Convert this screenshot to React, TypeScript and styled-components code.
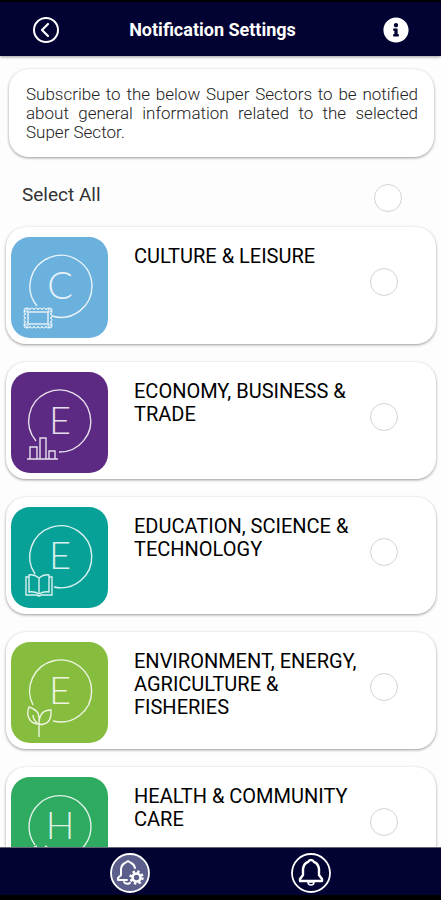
import React from "react";
import styled, { createGlobalStyle } from "styled-components";
import { FaInfoCircle } from "react-icons/fa";

const navy = "#020233";

const GlobalStyle = createGlobalStyle`
  * { box-sizing: border-box; }
  body { margin: 0; background: #fdfdfd; font-family: Roboto, sans-serif; }
`;

const Screen = styled.div`
  display: flex;
  flex-direction: column;
  height: 100vh;
  color: #000;
`;

const Header = styled.header`
  display: flex;
  align-items: center;
  justify-content: space-between;
  flex: none;
  height: 56px;
  padding: 2px 32px 0;
  border-top: 2px solid #000;
  background: ${navy};
  color: #fff;
  box-shadow: 0 1px 3px rgba(0, 0, 0, 0.4);
`;

const Heading = styled.h1`
  margin: 0 18px 0 0;
  font-size: 18px;
  line-height: 24px;
  font-weight: 700;
`;

const IconButton = styled.button`
  display: flex;
  padding: 0;
  border: 0;
  background: none;
  color: inherit;
  cursor: pointer;
`;

const Content = styled.main`
  flex: 1;
  min-height: 0;
  padding-top: 13px;
  overflow-y: auto;
  scrollbar-width: none;
`;

const Intro = styled.p`
  margin: 0 7px 0 9px;
  padding: 16px 16px 15px 17px;
  border-radius: 20px;
  background: #fff;
  box-shadow: 0 1px 3px rgba(0, 0, 0, 0.4);
  color: #222;
  font-size: 17px;
  line-height: 19px;
  font-weight: 300;
  text-align: justify;
`;

const SelectAll = styled.label`
  display: flex;
  justify-content: space-between;
  padding: 27px 39px 15px 22px;
  color: #333;
  font-size: 19px;
  line-height: 22px;
`;

const Check = styled.input`
  appearance: none;
  flex: none;
  width: 28px;
  height: 28px;
  margin: 0;
  border: 1px solid #d4d4d4;
  border-radius: 50%;
  background: #fff;
  cursor: pointer;

  &:checked { background: ${navy}; }
`;

const List = styled.ul`
  display: flex;
  flex-direction: column;
  gap: 18px;
  margin: 0;
  padding: 0 5px 18px 6px;
  list-style: none;
`;

const Card = styled.label`
  display: flex;
  align-items: center;
  padding: 10px 38px 6px 5px;
  border-radius: 20px;
  background: #fff;
  box-shadow: 0 1px 3px rgba(0, 0, 0, 0.4);
  cursor: pointer;

  ${Check} { margin-bottom: 12px; }
`;

const Tile = styled.svg<{ $color: string }>`
  flex: none;
  width: 97px;
  height: 101px;
  border-radius: 19px;
  background: ${(p) => p.$color};
  fill: none;
  stroke: #fff;
  stroke-opacity: 0.85;
  stroke-width: 1.4;
`;

const Letter = styled.text`
  font-family: Lato, sans-serif;
  font-size: 38px;
  font-weight: 300;
  text-anchor: middle;
  fill: #fff;
  fill-opacity: 0.85;
  stroke: none;
`;

const Title = styled.span`
  flex: 1;
  align-self: flex-start;
  padding: 8px 8px 0 26px;
  font-size: 20px;
  line-height: 23px;
  font-weight: 400;
`;

const TabBar = styled.nav`
  display: flex;
  justify-content: space-around;
  flex: none;
  height: 53px;
  padding: 5px 40px 0;
  border-top: 1px solid #667;
  border-bottom: 5px solid #000;
  background: ${navy};
  color: #fff;
`;

const Line = styled.svg`
  display: block;
  fill: none;
  stroke: currentColor;
  stroke-linecap: round;
  stroke-linejoin: round;
`;

type Sector = { letter: string; title: string; color: string; ring: string; art: React.ReactNode };

const scallops = (arc: string, count: number) => Array(count).fill(arc).join(" ");

const frameEdge = [
  "M15 73",
  scallops("a2 2 0 0 1 4 0", 6),
  scallops("a2 2 0 0 1 0 4", 4),
  scallops("a2 2 0 0 1 -4 0", 6),
  scallops("a2 2 0 0 1 0 -4", 4),
].join(" ");

const sectors: Sector[] = [
  {
    letter: "C",
    title: "CULTURE & LEISURE",
    color: "#6bb1dd",
    ring: "M26 69 A31 31 0 1 1 41 79",
    art: (
      <>
        <rect x="17" y="75" width="20" height="12" />
        <path d={frameEdge} strokeWidth="1" />
        <g strokeWidth="1">
          <circle cx="15" cy="73" r="2" />
          <circle cx="39" cy="73" r="2" />
          <circle cx="15" cy="89" r="2" />
          <circle cx="39" cy="89" r="2" />
        </g>
      </>
    ),
  },
  {
    letter: "E",
    title: "ECONOMY, BUSINESS & TRADE",
    color: "#5c2a83",
    ring: "M25 69 A31 31 0 1 1 48 80",
    art: <path d="M16 87 H47 M19 87 V75 h7 v12 M29 87 V66 h6 v21 M38 87 V79 h6 v8" />,
  },
  {
    letter: "E",
    title: "EDUCATION, SCIENCE & TECHNOLOGY",
    color: "#08a198",
    ring: "M24 67 A31 31 0 1 1 43 80",
    art: (
      <path d="M28 71 Q23 67 18 68 V85 Q23 84 28 87 Q33 84 38 85 V68 Q33 67 28 71 V87 M18 70 H15 V88 H26 Q28 90 30 88 H41 V70 H38" />
    ),
  },
  {
    letter: "E",
    title: "ENVIRONMENT, ENERGY, AGRICULTURE & FISHERIES",
    color: "#87bd3f",
    ring: "M22 63 A31 31 0 1 1 42 79",
    art: (
      <path d="M28 95 V82 M28 82 Q22 82 19 78 Q15 72 18 65 Q24 67 27 71 Q29 76 28 82 M28 82 Q28 68 40 68 Q41 80 33 82 Q30 83 28 82 M22 73 Q22 78 28 83" />
    ),
  },
  {
    letter: "H",
    title: "HEALTH & COMMUNITY CARE",
    color: "#2eaa61",
    ring: "M24 68 A31 31 0 1 1 74 68",
    art: <path d="M20 78 Q19 71 26 69 M34 69 Q38 70 38 76 L28 89 L20 78 M74 68 Q66 78 54 80" />,
  },
];

export default function App() {
  return (
    <>
      <GlobalStyle />
      <Screen>
        <Header>
          <IconButton aria-label="Back">
            <Line width="28" height="28" viewBox="0 0 28 28">
              <circle cx="14" cy="14" r="12" strokeWidth="2" />
              <path d="M16 8 L10 14 L16 20" strokeWidth="2.2" />
            </Line>
          </IconButton>
          <Heading>Notification Settings</Heading>
          <IconButton aria-label="Information">
            <FaInfoCircle size={26} />
          </IconButton>
        </Header>
        <Content>
          <Intro>
            Subscribe to the below Super Sectors to be notified about general information related to
            the selected Super Sector.
          </Intro>
          <SelectAll>
            Select All
            <Check type="checkbox" />
          </SelectAll>
          <List>
            {sectors.map((s) => (
              <li key={s.title}>
                <Card>
                  <Tile $color={s.color} viewBox="0 0 97 101" aria-hidden="true">
                    <path d={s.ring} />
                    <Letter x="49" y="62">
                      {s.letter}
                    </Letter>
                    {s.art}
                  </Tile>
                  <Title>{s.title}</Title>
                  <Check type="checkbox" />
                </Card>
              </li>
            ))}
          </List>
        </Content>
        <TabBar>
          <IconButton aria-label="Notification settings">
            <Line width="40" height="40" viewBox="0 0 40 40" strokeWidth="2">
              <circle cx="20" cy="20" r="19" fill="#5c5f8b" strokeWidth="1.8" />
              <path d="M17 27 H8 V25 L11 22 V17 Q11 12 15 10 L18 8 L21 10 Q24 11 25 15 M14 29 Q16 32 20 30" />
              <circle cx="26.5" cy="24.5" r="4" strokeWidth="2.6" />
              <circle cx="26.5" cy="24.5" r="6" strokeWidth="2.4" strokeLinecap="butt" strokeDasharray="2.4 2.31" />
            </Line>
          </IconButton>
          <IconButton aria-label="Notifications">
            <Line width="40" height="40" viewBox="0 0 40 40" strokeWidth="2.4">
              <circle cx="20" cy="20" r="19" strokeWidth="1.8" />
              <path d="M9 28 H31 V26 L28 22 V16 Q27 10 23 9 Q22 7 20 7 Q18 7 17 9 Q13 10 12 16 V22 L9 26Z" />
              <path d="M17 29 Q17 32 20 32 Q23 32 23 29Z" strokeWidth="1.6" />
            </Line>
          </IconButton>
        </TabBar>
      </Screen>
    </>
  );
}
